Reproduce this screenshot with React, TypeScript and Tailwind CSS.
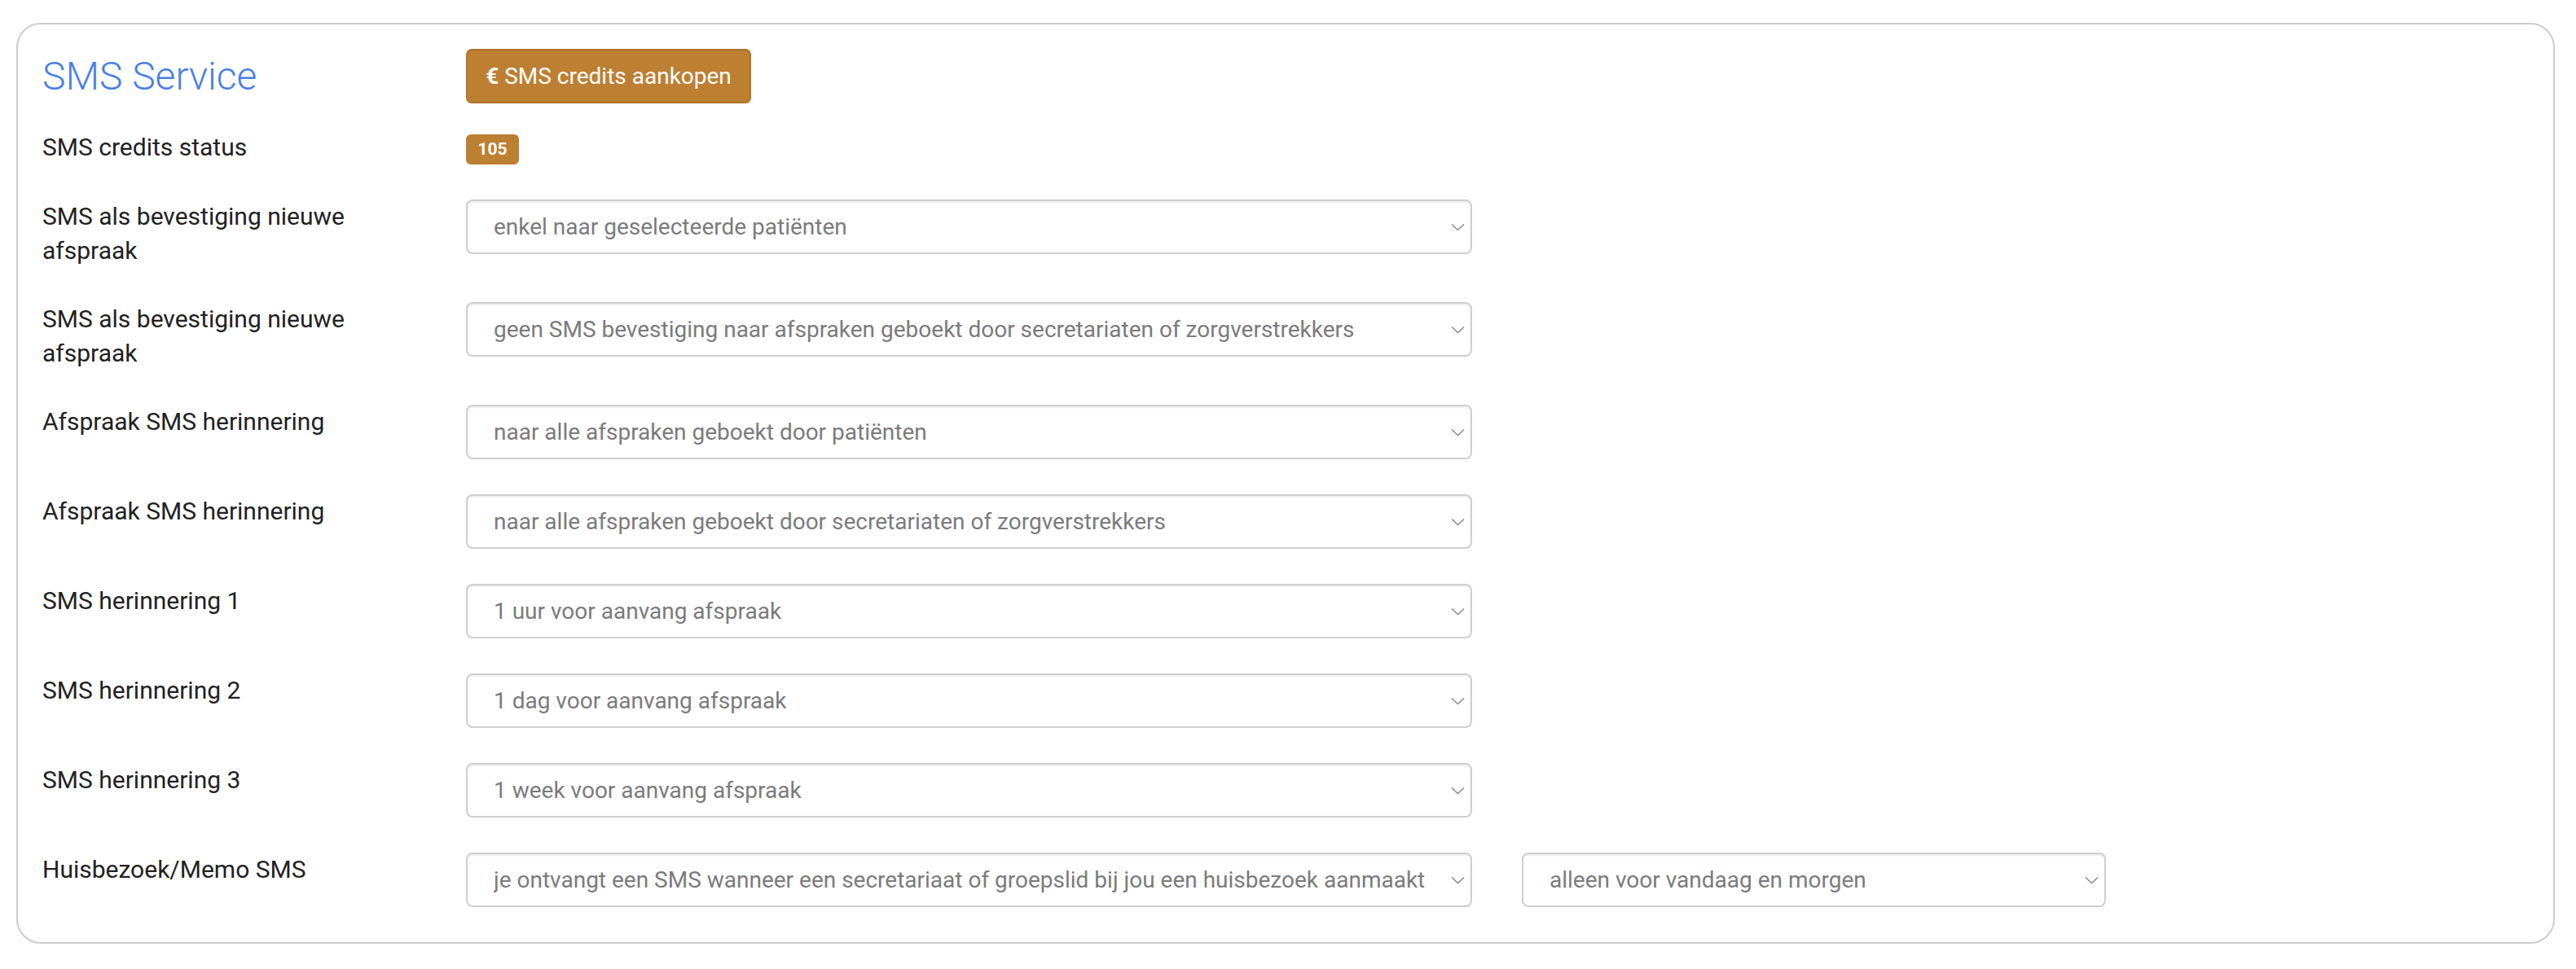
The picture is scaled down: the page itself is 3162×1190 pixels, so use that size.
import type { ReactNode } from "react"

const font = { fontFamily: "Roboto, 'Liberation Sans', Arial, sans-serif" }

function Chevron() {
  return (
    <svg width="17" height="10" viewBox="0 0 17 10" fill="none" className="shrink-0">
      <polyline points="1,1.5 8.5,8.5 16,1.5" stroke="#8a8a8a" strokeWidth="1.6" />
    </svg>
  )
}

function FakeSelect({ value, width = "w-[1235px]" }: { value: string; width?: string }) {
  return (
    <div
      className={`flex h-[67px] ${width} shrink-0 items-center justify-between rounded-[8px] border-2 border-[#cfcfcf] bg-white pl-[32px] pr-[7px] text-[28px] text-[#7b7b7b] shadow-[inset_0_2px_2px_rgba(0,0,0,0.07)]`}
    >
      <span className="truncate">{value}</span>
      <Chevron />
    </div>
  )
}

function Row({ label, children }: { label: string; children: ReactNode }) {
  return (
    <div className="flex items-start">
      <div className="w-[520px] shrink-0 pr-[40px] text-[30px] leading-[41.5px] text-[#222222]">{label}</div>
      {children}
    </div>
  )
}

export default function App() {
  const rows = [
    { label: "SMS als bevestiging nieuwe afspraak", value: "enkel naar geselecteerde patiënten" },
    {
      label: "SMS als bevestiging nieuwe afspraak",
      value: "geen SMS bevestiging naar afspraken geboekt door secretariaten of zorgverstrekkers",
    },
    { label: "Afspraak SMS herinnering", value: "naar alle afspraken geboekt door patiënten" },
    { label: "Afspraak SMS herinnering", value: "naar alle afspraken geboekt door secretariaten of zorgverstrekkers" },
    { label: "SMS herinnering 1", value: "1 uur voor aanvang afspraak" },
    { label: "SMS herinnering 2", value: "1 dag voor aanvang afspraak" },
    { label: "SMS herinnering 3", value: "1 week voor aanvang afspraak" },
  ]

  return (
    <div className="min-h-[1190px] w-full bg-white pt-[28px]" style={font}>
      <div className="ml-[20px] mr-[26px] rounded-[30px] border-2 border-[#cccccc] px-[30px] pb-[43px] pt-[30px]">
        <div className="flex h-[67px] items-center">
          <h2 className="w-[520px] shrink-0 text-[48px] font-light leading-none text-[#4a7fe3]">SMS Service</h2>
          <button
            type="button"
            className="h-[67px] w-[350px] rounded-[7px] border-2 border-[#b0732a] bg-[#bd7f32] text-[28px] text-white"
          >
            <span className="font-bold">€</span> SMS credits aankopen
          </button>
        </div>

        <div className="mt-[33px] flex flex-col gap-[43px]">
          <Row label="SMS credits status">
            <span className="mt-[5px] inline-flex h-[37px] w-[65px] items-center justify-center rounded-[6px] bg-[#bd7f32] text-[21px] font-bold text-white">
              105
            </span>
          </Row>

          {rows.map((row, index) => (
            <Row key={index} label={row.label}>
              <FakeSelect value={row.value} />
            </Row>
          ))}

          <Row label="Huisbezoek/Memo SMS">
            <div className="flex gap-[61px]">
              <FakeSelect value="je ontvangt een SMS wanneer een secretariaat of groepslid bij jou een huisbezoek aanmaakt" />
              <FakeSelect value="alleen voor vandaag en morgen" width="w-[717px]" />
            </div>
          </Row>
        </div>
      </div>
    </div>
  )
}
